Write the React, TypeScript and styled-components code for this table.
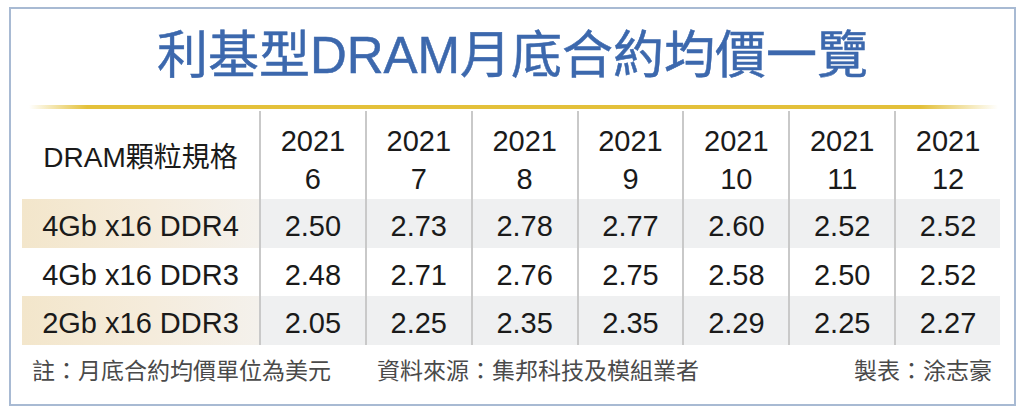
import React from 'react';
import styled, { createGlobalStyle } from 'styled-components';

const GlobalStyle = createGlobalStyle`
  html, body {
    margin: 0;
    padding: 0;
    background: #ffffff;
  }
  body {
    font-family: 'Liberation Sans', Arial, 'Noto Sans CJK TC', sans-serif;
  }
`;

const Frame = styled.div`
  box-sizing: border-box;
  width: 1007px;
  height: 399px;
  margin: 7px 0 0 9px;
  border: 2px solid #a8bad3;
  display: flex;
  flex-direction: column;
`;

const Title = styled.h1`
  margin: 0;
  padding-top: 21px;
  height: 74px;
  box-sizing: border-box;
  text-align: center;
  font-family: 'Liberation Sans', Arial, 'Noto Sans CJK TC', sans-serif;
  font-size: 51px;
  line-height: 51px;
  font-weight: 400;
  color: #3c68ad;
  -webkit-text-stroke: 0.5px #3c68ad;
`;

const GoldRule = styled.div`
  height: 4px;
  margin: 22px 16px 0 18px;
  background: linear-gradient(
    to right,
    rgba(230, 196, 50, 0) 0%,
    #e4c13a 6%,
    #e3c03a 92%,
    rgba(230, 196, 50, 0) 100%
  );
`;

const Table = styled.div`
  display: grid;
  grid-template-columns: 237px repeat(7, 1fr);
  grid-template-rows: 88px repeat(3, 48.7px);
  width: 978px;
  margin: 2px 0 0 11px;
`;

const Cell = styled.div<{ $shade: 'none' | 'gray' | 'label'; $first?: boolean; $head?: boolean }>`
  display: flex;
  flex-direction: column;
  align-items: center;
  justify-content: center;
  padding-top: ${(p) => (p.$head ? '10px' : '5px')};
  box-sizing: border-box;
  border-left: ${(p) => (p.$first ? 'none' : '2px solid #c9c9c9')};
  background: ${(p) =>
    p.$shade === 'gray'
      ? '#eff0f1'
      : p.$shade === 'label'
        ? 'linear-gradient(to right, #f3e6cb 0%, #f5ecdc 55%, #f4f1ec 100%)'
        : 'transparent'};
  color: #1a1a1a;
  font-size: 29px;
  line-height: 38px;
`;

const HeadLabel = styled.span`
  font-size: 28px;
  margin-top: -4px;
  font-family: 'Liberation Sans', Arial, 'Noto Sans CJK TC', sans-serif;
`;

const Footer = styled.div`
  display: flex;
  align-items: center;
  padding: 9px 22px 0 21px;
  color: #4a4a4a;
  font-family: 'Noto Sans CJK TC', sans-serif;
  font-size: 23px;
  line-height: 30px;
`;

const Note = styled.span<{ $grow?: boolean; $gap?: number }>`
  flex: ${(p) => (p.$grow ? '1 1 auto' : '0 0 auto')};
  margin-right: ${(p) => p.$gap ?? 0}px;
`;

const months = ['6', '7', '8', '9', '10', '11', '12'];

const rows: { name: string; values: string[] }[] = [
  { name: '4Gb x16 DDR4', values: ['2.50', '2.73', '2.78', '2.77', '2.60', '2.52', '2.52'] },
  { name: '4Gb x16 DDR3', values: ['2.48', '2.71', '2.76', '2.75', '2.58', '2.50', '2.52'] },
  { name: '2Gb x16 DDR3', values: ['2.05', '2.25', '2.35', '2.35', '2.29', '2.25', '2.27'] },
];

export default function App() {
  return (
    <>
      <GlobalStyle />
      <Frame>
        <Title>利基型DRAM月底合約均價一覽</Title>
        <GoldRule />
        <Table>
          <Cell $shade="none" $first $head>
            <HeadLabel>DRAM顆粒規格</HeadLabel>
          </Cell>
          {months.map((m) => (
            <Cell key={m} $shade="none" $head>
              <span>2021</span>
              <span>{m}</span>
            </Cell>
          ))}
          {rows.map((row, i) => (
            <React.Fragment key={row.name}>
              <Cell $shade={i % 2 === 0 ? 'label' : 'none'} $first>
                {row.name}
              </Cell>
              {row.values.map((v, j) => (
                <Cell key={j} $shade={i % 2 === 0 ? 'gray' : 'none'}>
                  {v}
                </Cell>
              ))}
            </React.Fragment>
          ))}
        </Table>
        <Footer>
          <Note $gap={46}>註：月底合約均價單位為美元</Note>
          <Note $grow>資料來源：集邦科技及模組業者</Note>
          <Note>製表：涂志豪</Note>
        </Footer>
      </Frame>
    </>
  );
}
